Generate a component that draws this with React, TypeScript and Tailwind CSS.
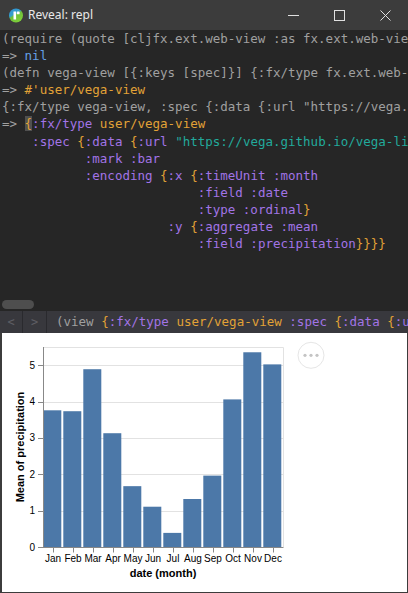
import React from "react";

const G = "text-[#a0a0a0]";
const B = "text-[#64a0e6]";
const O = "text-[#e2a236]";
const P = "text-[#a274e6]";
const T = "text-[#22aa9c]";

type Seg = [string, string];

const lines: Seg[][] = [
  [[G, "(require (quote [cljfx.ext.web-view :as fx.ext.web-view]))"]],
  [[G, "=> "], [B, "nil"]],
  [[G, "(defn vega-view [{:keys [spec]}] {:fx/type fx.ext.web-view/with-engine-props})"]],
  [[G, "=> "], [O, "#'user/vega-view"]],
  [[G, "{:fx/type vega-view, :spec {:data {:url \"https://vega.github.io/vega-lite/data/seattle-weather.csv\"}}}"]],
  [[G, "=> "], ["CURSOR", "{"], [P, ":fx/type"], [G, " "], [O, "user/vega-view"]],
  [[G, "    "], [P, ":spec"], [G, " "], [O, "{"], [P, ":data"], [G, " "], [O, "{"], [P, ":url"], [G, " "], [T, "\"https://vega.github.io/vega-lite/data/seattle-weather.csv\""]],
  [[G, "           "], [P, ":mark :bar"]],
  [[G, "           "], [P, ":encoding"], [G, " "], [O, "{"], [P, ":x"], [G, " "], [O, "{"], [P, ":timeUnit :month"]],
  [[G, "                          "], [P, ":field :date"]],
  [[G, "                          "], [P, ":type :ordinal"], [O, "}"]],
  [[G, "                      "], [P, ":y"], [G, " "], [O, "{"], [P, ":aggregate :mean"]],
  [[G, "                          "], [P, ":field :precipitation"], [O, "}}}}"]],
];

const months = ["Jan", "Feb", "Mar", "Apr", "May", "Jun", "Jul", "Aug", "Sep", "Oct", "Nov", "Dec"];
const values = [3.759, 3.734, 4.889, 3.129, 1.673, 1.108, 0.388, 1.32, 1.963, 4.059, 5.355, 5.022];

const Y0 = 547;
const UNIT = 200 / 5.5;
const yOf = (v: number) => Y0 - v * UNIT;

function Chart() {
  return (
    <svg width={405} height={259} viewBox="2 333 405 259" className="block bg-white" style={{ fontFamily: '"Liberation Sans", Arial, sans-serif' }}>
      {[1, 2, 3, 4, 5].map((v) => (
        <line key={v} x1={43} x2={283} y1={Math.round(yOf(v)) + 0.5} y2={Math.round(yOf(v)) + 0.5} stroke="#e2e2e2" strokeWidth={1} />
      ))}
      <line x1={43} x2={283.5} y1={347.5} y2={347.5} stroke="#e2e2e2" />
      <line x1={283.5} x2={283.5} y1={347.5} y2={547} stroke="#e2e2e2" />
      {values.map((v, i) => (
        <rect key={i} x={43.3 + 20 * i} y={yOf(v)} width={18} height={Y0 - yOf(v)} fill="#4c78a8" />
      ))}
      <line x1={43.5} x2={43.5} y1={347} y2={547.5} stroke="#888" />
      {[0, 1, 2, 3, 4, 5].map((v) => (
        <g key={v}>
          <line x1={38} x2={43.5} y1={Math.round(yOf(v)) + 0.5} y2={Math.round(yOf(v)) + 0.5} stroke="#888" />
          <text x={35} y={yOf(v) + 3.5} textAnchor="end" fontSize={10} fill="#000">
            {v}
          </text>
        </g>
      ))}
      <text transform="translate(24 447) rotate(-90)" textAnchor="middle" fontSize={11} fontWeight="bold" fill="#000">
        Mean of precipitation
      </text>
      <line x1={43} x2={283.5} y1={547.5} y2={547.5} stroke="#888" />
      {months.map((m, i) => (
        <g key={m}>
          <line x1={53.5 + 20 * i} x2={53.5 + 20 * i} y1={547.5} y2={552.5} stroke="#888" />
          <text x={53 + 20 * i} y={562} textAnchor="middle" fontSize={10} fill="#000">
            {m}
          </text>
        </g>
      ))}
      <text x={163} y={577} textAnchor="middle" fontSize={11} fontWeight="bold" fill="#000">
        date (month)
      </text>
      <circle cx={311} cy={355.3} r={13} fill="#fff" stroke="#e6e6e6" />
      <circle cx={305} cy={355.3} r={1.6} fill="#c4c4c4" />
      <circle cx={311} cy={355.3} r={1.6} fill="#c4c4c4" />
      <circle cx={317} cy={355.3} r={1.6} fill="#c4c4c4" />
    </svg>
  );
}

export default function App() {
  return (
    <div className="w-[408px] h-[593px] flex flex-col bg-[#3c3c3c] overflow-hidden" style={{ fontFamily: '"DejaVu Sans Mono", monospace' }}>
      {/* title bar */}
      <div className="h-[30px] flex items-center shrink-0">
        <svg width={16} height={16} viewBox="0 0 16 16" className="ml-[8px] shrink-0">
          <defs>
            <linearGradient id="lg" x1="0" y1="0" x2="0.6" y2="1">
              <stop offset="0" stopColor="#2f8fe0" />
              <stop offset="0.45" stopColor="#35a0c8" />
              <stop offset="0.55" stopColor="#6cc03a" />
              <stop offset="1" stopColor="#7fcf3a" />
            </linearGradient>
          </defs>
          <circle cx={8} cy={8.5} r={7} fill="url(#lg)" />
          <rect x={5.5} y={4.5} width={2.6} height={8} fill="#fff" />
          <rect x={8.8} y={4.5} width={2.8} height={2.8} rx={0.6} fill="#fff" />
        </svg>
        <span className="ml-[4px] text-[12px] text-[#e8e8e8]" style={{ fontFamily: '"Noto Sans", "Open Sans", sans-serif' }}>
          Reveal: repl
        </span>
        <div className="ml-auto flex h-full shrink-0">
          <div className="w-[46px] h-full flex items-center justify-center">
            <svg width={11} height={11} viewBox="0 0 11 11">
              <line x1={0} x2={11} y1={5.5} y2={5.5} stroke="#e0e0e0" strokeWidth={1} />
            </svg>
          </div>
          <div className="w-[46px] h-full flex items-center justify-center">
            <svg width={11} height={11} viewBox="0 0 11 11">
              <rect x={0.5} y={0.5} width={10} height={10} fill="none" stroke="#e0e0e0" strokeWidth={1} />
            </svg>
          </div>
          <div className="w-[46px] h-full flex items-center justify-center">
            <svg width={11} height={11} viewBox="0 0 11 11">
              <path d="M0.5 0.5 L10.5 10.5 M10.5 0.5 L0.5 10.5" stroke="#e0e0e0" strokeWidth={1} />
            </svg>
          </div>
        </div>
      </div>
      {/* code area */}
      <div className="h-[281px] shrink-0 bg-[#262626] flex flex-col overflow-hidden">
        <div className="flex-1 pl-[2px] text-[12.5px] leading-[17.1px] whitespace-pre overflow-hidden">
          {lines.map((segs, i) => (
            <div key={i}>
              {segs.map(([c, t], j) =>
                c === "CURSOR" ? (
                  <span key={j} className="text-[#e2a236] bg-[#505050]">
                    {t}
                  </span>
                ) : (
                  <span key={j} className={c}>
                    {t}
                  </span>
                )
              )}
            </div>
          ))}
        </div>
        <div className="h-[12px] flex items-start pl-[2px] pt-[1px]">
          <div className="w-[32px] h-[9px] rounded-full bg-[#4e4e4e]" />
        </div>
      </div>
      {/* toolbar */}
      <div className="h-[22px] shrink-0 bg-[#38383d] flex items-center overflow-hidden">
        <div className="w-[23px] shrink-0 h-full flex items-center justify-center border-r border-[#2a2a2e] text-[#5e5e64] text-[12px]">
          &lt;
        </div>
        <div className="w-[24px] shrink-0 h-full flex items-center justify-center border-r border-[#2a2a2e] text-[#5e5e64] text-[12px]">
          &gt;
        </div>
        <div className="pl-[9px] shrink-0 text-[12.5px] whitespace-pre">
          <span className={G}>(view </span>
          <span className={O}>{"{"}</span>
          <span className={P}>:fx/type</span>
          <span className={G}> </span>
          <span className={O}>user/vega-view</span>
          <span className={G}> </span>
          <span className={P}>:spec</span>
          <span className={G}> </span>
          <span className={O}>{"{"}</span>
          <span className={P}>:data</span>
          <span className={G}> </span>
          <span className={O}>{"{"}</span>
          <span className={P}>:url</span>
        </div>
      </div>
      {/* web view */}
      <div className="h-[260px] shrink-0 pl-[2px] pr-[1px] pb-[1px] bg-[#3c3c3c]">
        <Chart />
      </div>
    </div>
  );
}
